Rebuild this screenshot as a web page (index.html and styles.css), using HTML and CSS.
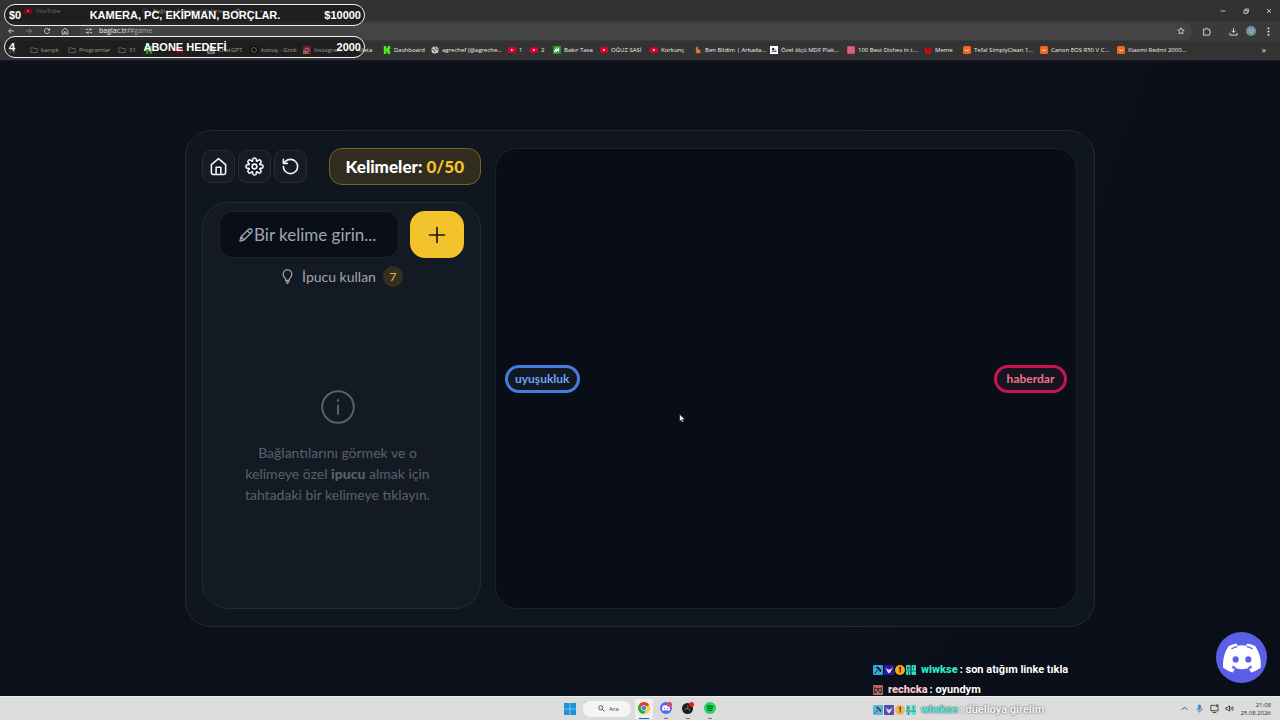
FILE: index.html
```html
<!DOCTYPE html>
<html lang="tr">
<head>
<meta charset="utf-8">
<title>Bağlaç - Kelime Oyunu</title>
<link rel="stylesheet" href="styles.css">
</head>
<body>
<svg class="defs" aria-hidden="true">
  <symbol id="folder" viewBox="0 0 10 10"><path d="M1 2.200h3l1 1h4v5H1z" fill="none" stroke="#b5b5b5"/></symbol>
  <symbol id="yt" viewBox="0 0 10 10"><rect y="1.500" width="10" height="7" rx="1.500" fill="#e0002c"/><path d="M4 3.400v3.200L6.600 5z" fill="#fff"/></symbol>
  <symbol id="shop" viewBox="0 0 10 10"><rect width="10" height="10" rx="2" fill="#f2671d"/><path d="M2.500 4.500q2.500 3 5 0" fill="none" stroke="#fff"/></symbol>
  <symbol id="kick" viewBox="0 0 10 10"><path d="M1 0h3v3h1V2h1V0h3v4H8v2h1v4H6V8H5V7H4v3H1z" fill="#43f01c"/></symbol>
  <symbol id="discord" viewBox="0 0 24 24"><path d="M20.300 4.400a19.800 19.800 0 0 0-4.900-1.500c-.3.400-.500.900-.7 1.300a18 18 0 0 0-5.500 0c-.2-.4-.4-.9-.7-1.300a19.700 19.700 0 0 0-4.900 1.500C.5 9-.3 13.600.1 18.100a20 20 0 0 0 6 3c.5-.6.900-1.300 1.300-2l-2-1 .5-.4c4 1.800 8.200 1.800 12.100 0l.5.4-2 1c.4.700.8 1.400 1.300 2a20 20 0 0 0 6-3c.5-5.200-.8-9.700-3.500-13.700z" fill="#fff"/><ellipse cx="8" cy="12.900" rx="1.900" ry="2" fill="#5b5fe8"/><ellipse cx="16" cy="12.900" rx="1.900" ry="2" fill="#5b5fe8"/><path d="M5.300 6.300q2-1.300 3.700-1.500M18.700 6.300q-2-1.300-3.700-1.500M6 17q1 .8 2 1.100M18 17q-1 .8-2 1.100" fill="none" stroke="#5b5fe8" stroke-width=".8"/></symbol>
  <symbol id="badge-sword" viewBox="0 0 10 10"><rect width="10" height="10" rx="1" fill="#31a9d6"/><path d="M1.500 8.500L6 4M3 2.500L5 2l3 3-.5 2L6 4z" fill="#06243c" stroke="#06243c"/></symbol>
  <symbol id="badge-bird" viewBox="0 0 10 10"><rect width="10" height="10" rx="1" fill="#2a1aa0"/><path d="M1.500 2.500L4 4.500h2l3-2.500-2.500 5L5 8.500 3.500 7z" fill="#e4dcff"/></symbol>
  <symbol id="badge-one" viewBox="0 0 10 10"><circle cx="5" cy="5" r="5" fill="#f5a81c"/><path d="M3.800 3.500L5.300 2.500V7.500" fill="none" stroke="#3e2600" stroke-width="1.300"/></symbol>
  <symbol id="badge-gift" viewBox="0 0 10 10"><rect width="4.500" height="10" rx="1" fill="#35dfc4"/><rect x="5.500" width="4.500" height="10" rx="1" fill="#35dfc4"/><path d="M1.500 2h1.500v2H1.500zM0 6h10M2.500 7v3M7.500 1v3" fill="none" stroke="#075e63" stroke-width=".9"/></symbol>
</svg>

<div class="screen">
  <header class="browser">
    <div class="tabs">
      <div class="tab"><svg class="fav"><use href="#yt"/></svg><span>YouTube</span><button class="close" aria-label="Sekmeyi kapat">×</button></div>
      <div class="tab tab-active"><svg class="fav" viewBox="0 0 10 10"><circle cx="5" cy="5" r="3" fill="none" stroke="#5879a8"/></svg><span>Bağlaç - Anlamsal Kelime</span><svg class="fav" viewBox="0 0 10 10"><path d="M1 4h2l3-2v6L3 6H1zM7 3q2 2 0 4" fill="none" stroke="#bbb"/></svg><button class="close" aria-label="Sekmeyi kapat">×</button></div>
      <button class="close" aria-label="Yeni sekme">+</button>
      <div class="window-buttons">
        <button aria-label="Küçült"><svg viewBox="0 0 10 10"><path d="M2 5h6"/></svg></button>
        <button aria-label="Geri yükle"><svg viewBox="0 0 10 10"><path d="M2.500 4h4v4h-4zM4 4V2.500h4v4H6.500"/></svg></button>
        <button aria-label="Kapat"><svg viewBox="0 0 10 10"><path d="M2.500 2.500l5 5M7.500 2.500l-5 5"/></svg></button>
      </div>
    </div>
    <div class="toolbar">
      <button aria-label="Geri"><svg viewBox="0 0 10 10"><path d="M9 5H2M5 2L2 5l3 3"/></svg></button>
      <button class="faded" aria-label="İleri"><svg viewBox="0 0 10 10"><path d="M1 5h7M5 2l3 3-3 3"/></svg></button>
      <button aria-label="Yenile"><svg viewBox="0 0 10 10"><path d="M8 6a3.200 3.200 0 1 1-1-3.500L8.200 4M8.300 1.500V4H6"/></svg></button>
      <button aria-label="Ana sayfa"><svg viewBox="0 0 10 10"><path d="M1.500 4.500L5 1.500l3.500 3V9H6V6H4v3H1.500z"/></svg></button>
      <label class="address"><svg viewBox="0 0 10 10"><path d="M1 3h3M6 3h3M1 7h3M6 7h3M6 1.500v3M4 5.500v3"/></svg><span>baglac.tr/<i>#game</i></span><svg class="star" viewBox="0 0 10 10"><path d="M5 1l1.200 2.600 2.800.3-2.100 1.900.6 2.800L5 7.200 2.500 8.600l.6-2.800L1 3.900l2.800-.3z"/></svg></label>
      <div class="tools">
        <button aria-label="Uzantılar"><svg viewBox="0 0 10 10"><path d="M1.500 2.500h2.500q0-1.500 1-1.500t1 1.500h2.500v2.300q1 0 1 1t-1 1v2.200h-7V6.500q1 0 1-1t-1-1z"/></svg></button>
        <button class="download" aria-label="İndirilenler"><svg viewBox="0 0 10 10"><path d="M5 1v5M2.800 4L5 6.300 7.200 4M1 6.500V9h8V6.500"/></svg></button>
        <button class="profile" aria-label="Profil">U</button>
        <button class="dots" aria-label="Menü"><svg viewBox="0 0 10 10"><circle cx="5" cy="1.500" r="1.100"/><circle cx="5" cy="5" r="1.100"/><circle cx="5" cy="8.500" r="1.100"/></svg></button>
      </div>
    </div>
    <nav class="bookmarks" aria-label="Yer işaretleri">
      <a href="#"><svg viewBox="0 0 10 10"><path d="M1 1h3v3H1zM6 1h3v3H6zM1 6h3v3H1zM6 6h3v3H6z" fill="#777"/></svg></a>
      <a href="#"><svg><use href="#folder"/></svg>karışık</a>
      <a href="#"><svg><use href="#folder"/></svg>Programlar</a>
      <a href="#"><svg><use href="#folder"/></svg>31</a>
      <a href="#"><svg><use href="#kick"/></svg></a>
      <a href="#"><svg><use href="#yt"/></svg></a>
      <a href="#"><svg viewBox="0 0 10 10"><rect width="10" height="10" rx="2" fill="#ddd"/><circle cx="5" cy="5" r="3" fill="none" stroke="#222"/></svg>ChatGPT</a>
      <a href="#"><svg viewBox="0 0 10 10"><circle cx="5" cy="5" r="5" fill="#111"/><circle cx="5" cy="5" r="3" fill="none" stroke="#ddd"/></svg>konuş - Grok</a>
      <a href="#"><svg viewBox="0 0 10 10"><rect width="10" height="10" rx="2" fill="#d82b78"/><path d="M0 8V10H8L0 5z" fill="#f8ad36"/><circle cx="5" cy="5" r="2.300" fill="none" stroke="#fff"/></svg>Instagram</a>
      <a href="#" class="meta">Meta</a>
      <a href="#"><svg><use href="#kick"/></svg>Dashboard</a>
      <a href="#"><svg viewBox="0 0 10 10"><circle cx="5" cy="5" r="4.500" fill="#ccc"/><path d="M1 4l3 1 1 3M5 1l1 3 3 1" fill="none" stroke="#333"/></svg>agrechef (@agreche...</a>
      <a href="#"><svg><use href="#yt"/></svg>1</a>
      <a href="#"><svg><use href="#yt"/></svg>2</a>
      <a href="#"><svg viewBox="0 0 10 10"><rect width="10" height="10" fill="#1d9c2c"/><path d="M1.500 7.500L4 3v4l3-4v4" fill="none" stroke="#fff" stroke-width="1.300"/></svg>Bakır Tava</a>
      <a href="#"><svg><use href="#yt"/></svg>OĞUZ SASİ</a>
      <a href="#"><svg><use href="#yt"/></svg>Korkunç</a>
      <a href="#"><svg viewBox="0 0 10 10"><path d="M3 1h2v3l3 1v4H3L2 6z" fill="#d77440"/></svg>Ben Bildim | Arkada...</a>
      <a href="#"><svg viewBox="0 0 10 10"><rect width="10" height="10" fill="#fff"/><path d="M2 7h6M3 3h2v2H3zM6 5h2" stroke="#222"/></svg>Özel ölçü MDF Plak...</a>
      <a href="#"><svg viewBox="0 0 10 10"><rect width="10" height="10" fill="#c52552"/><path d="M0 2.500h10M0 5h10M0 7.500h10M2.500 0v10M5 0v10M7.500 0v10" stroke="#eda7b9" stroke-width=".7"/></svg>100 Best Dishes in t...</a>
      <a href="#"><svg viewBox="0 0 10 10"><circle cx="5" cy="5.500" r="4" fill="#d40e1a"/><path d="M5 0v4M3 5h4" stroke="#66070c"/></svg>Meme</a>
      <a href="#"><svg><use href="#shop"/></svg>Tefal SimplyClean 1...</a>
      <a href="#"><svg><use href="#shop"/></svg>Canon EOS R50 V C...</a>
      <a href="#"><svg><use href="#shop"/></svg>Xiaomi Redmi 2000...</a>
      <button class="more" aria-label="Diğer yer işaretleri">»</button>
    </nav>
  </header>

  <main class="page">
    <section class="card">
      <div class="side">
        <div class="top">
          <div class="icon-buttons">
            <button aria-label="Ana sayfa"><svg viewBox="0 0 24 24"><path d="M3 9.500l9-7.500 9 7.500V20a2 2 0 0 1-2 2H5a2 2 0 0 1-2-2zM9 22v-9h6v9"/></svg></button>
            <button aria-label="Ayarlar"><svg viewBox="-12 -12 24 24"><defs><path id="tooth" d="M6.740-2.790Q7.100-2.300 7.800-2.400L9.300-2.200Q10.800-1.800 10.800 0T9.300 2.200L7.800 2.400Q7.100 2.300 6.740 2.790"/></defs><use href="#tooth"/><use href="#tooth" transform="rotate(45)"/><use href="#tooth" transform="rotate(90)"/><use href="#tooth" transform="rotate(135)"/><use href="#tooth" transform="rotate(180)"/><use href="#tooth" transform="rotate(225)"/><use href="#tooth" transform="rotate(270)"/><use href="#tooth" transform="rotate(315)"/><circle r="3"/></svg></button>
            <button aria-label="Yeniden başlat"><svg viewBox="0 0 24 24"><path d="M3 12a9 9 0 1 0 9-9 9.700 9.700 0 0 0-6.700 2.700L3 8M3 3v5h5"/></svg></button>
          </div>
          <div class="score">Kelimeler: <b>0/50</b></div>
        </div>
        <div class="panel">
          <form class="entry">
            <label class="field"><svg viewBox="0 0 24 24"><path d="M3 21l1.500-6L16 3.500a3.200 3.200 0 0 1 4.500 4.500L9 19.500zM14 5.500l4.500 4.500M5 15l4 4"/></svg><input type="text" placeholder="Bir kelime girin..." aria-label="Bir kelime girin"></label>
            <button class="add" type="button" aria-label="Ekle"><svg viewBox="0 0 24 24"><path d="M12 3v18M3 12h18"/></svg></button>
          </form>
          <button class="hint"><svg viewBox="0 0 24 24"><path d="M9 18v-1.500C9 14.500 5 13 5 8.500a7 7 0 0 1 14 0c0 4.500-4 6-4 8V18zM9 20.500h6M10.500 23h3"/></svg><span>İpucu kullan</span><span class="count">7</span></button>
          <div class="empty">
            <svg viewBox="0 0 34 34"><circle cx="17" cy="17" r="15.800"/><path d="M17 15.500v8.500M17 10v1"/></svg>
            <p>Bağlantılarını görmek ve o kelimeye özel <strong>ipucu</strong> almak için tahtadaki bir kelimeye tıklayın.</p>
          </div>
        </div>
      </div>
      <div class="board">
        <button class="word blue">uyuşukluk</button>
        <button class="word red">haberdar</button>
      </div>
    </section>
  </main>

  <footer class="taskbar">
    <div class="apps">
      <button aria-label="Başlat"><svg viewBox="0 0 12 12"><path d="M0 0h5.700v5.700H0zM6.300 0H12v5.700H6.300zM0 6.300h5.700V12H0zM6.300 6.300H12V12H6.300z" fill="#1795dc"/></svg></button>
      <label class="search"><svg viewBox="0 0 10 10"><circle cx="4" cy="4" r="3"/><path d="M6.200 6.200L9.500 9.500"/></svg><input type="text" placeholder="Ara" aria-label="Ara"></label>
      <button class="running current" aria-label="Chrome"><svg viewBox="0 0 12 12"><circle cx="6" cy="6" r="6" fill="#ffca28"/><path d="M6 6L.8 3A6 6 0 0 1 11.200 3z" fill="#e53b2e"/><path d="M6 6L.8 3A6 6 0 0 0 6 12L8 7z" fill="#2da94f"/><circle cx="6" cy="6" r="2.800" fill="#fff"/><circle cx="6" cy="6" r="2.200" fill="#3b7ded"/></svg></button>
      <button class="running" aria-label="Discord"><svg viewBox="0 0 12 12"><circle cx="6" cy="6" r="6" fill="#5865f2"/><use href="#discord" x="2" y="2" width="8" height="8"/><circle cx="9.500" cy="2.500" r="2.500" fill="#d94b5c"/></svg></button>
      <button class="running" aria-label="OBS"><svg viewBox="0 0 12 12"><circle cx="5.500" cy="6.500" r="5.500" fill="#1c1c1c"/><path d="M5 3q2 1 .5 3.500M2.500 8q1.500-2 3-1.500M8 9Q8 6.500 5.500 6.500" fill="none" stroke="#999" stroke-width=".7"/><circle cx="9.500" cy="2.500" r="2.500" fill="#f01818"/></svg></button>
      <button class="running" aria-label="Spotify"><svg viewBox="0 0 12 12"><circle cx="6" cy="6" r="6" fill="#1ed760"/><path d="M2.800 4.300q3.500-1 6.500.5M3.200 6.300q3-.8 5.500.5M3.500 8.200q2.500-.6 4.500.4" fill="none" stroke="#11321d"/></svg></button>
    </div>
    <div class="tray">
      <svg viewBox="0 0 10 10"><path d="M2 6.500l3-3 3 3"/></svg>
      <svg class="mic" viewBox="0 0 10 10"><rect x="3.700" y="1" width="2.600" height="5" rx="1.300" fill="#4a83bd"/><path d="M2 5q0 3 3 3t3-3M5 8v1.500"/></svg>
      <svg viewBox="0 0 10 10"><path d="M6 1.500H1v6h8V4M3 9.500h4M7 1h2v2H7z"/></svg>
      <svg viewBox="0 0 10 10"><path d="M1 4h1.500L5 2v6L2.500 6H1zM6.500 3.500q1 1.500 0 3M8 2.500q2 2.500 0 5"/></svg>
      <div class="clock"><time>21:08</time><span>25.08.2026</span></div>
    </div>
  </footer>

  <div class="goals">
    <div class="goal"><span>$0</span><span>KAMERA, PC, EKİPMAN, BORÇLAR.</span><span>$10000</span></div>
    <div class="goal"><span>4</span><span>ABONE HEDEFİ</span><span>2000</span></div>
  </div>

  <div class="discord"><svg><use href="#discord"/></svg></div>

  <div class="chat">
    <p><svg><use href="#badge-sword"/></svg><svg><use href="#badge-bird"/></svg><svg><use href="#badge-one"/></svg><svg><use href="#badge-gift"/></svg><b>wiwkse</b><span>: son atığım linke tıkla</span></p>
    <p><svg viewBox="0 0 10 10"><rect width="10" height="10" rx="1" fill="#b4665c"/><path d="M1 2l2 1h4l2-1v6H1z" fill="#512b32"/><path d="M2 5h2M6 5h2M4 7h2" stroke="#f2c6b9"/></svg><b class="pink">rechcka</b><span>: oyundym</span></p>
    <p class="last"><svg><use href="#badge-sword"/></svg><svg><use href="#badge-bird"/></svg><svg><use href="#badge-one"/></svg><svg><use href="#badge-gift"/></svg><b>wiwkse</b><span>: düelloya girelim</span></p>
  </div>

  <svg class="cursor" viewBox="0 0 10 14"><path d="M1 1v10l2.300-2 1.500 3.500 1.700-.8L5 8.400h3.300z" fill="#fff" stroke="#111" stroke-width=".7"/></svg>
</div>
</body>
</html>
```

FILE: styles.css
```css
* { box-sizing: border-box; }
body { margin: 0; background: #0b0f19; font-family: Lato, "Open Sans", sans-serif; }
button, input { font: inherit; color: inherit; background: none; border: 0; padding: 0; margin: 0; }
svg { display: block; flex: none; }
p { margin: 0; }
.defs { position: absolute; width: 0; height: 0; }

.screen { position: relative; min-height: 100vh; display: grid; grid-template-rows: auto 1fr auto; overflow: hidden; }

/* browser chrome */
.browser { background: #353535; color: #dcdcdc; font: 7px/10px "Open Sans", "Noto Sans", sans-serif; border-bottom: 1px solid #17181f; }
.browser button { display: grid; place-items: center; }
.browser svg { width: 8px; height: 8px; }
.toolbar svg, .window-buttons svg { fill: none; stroke: #e0e0e0; }
.tabs { display: flex; align-items: center; gap: 4px; height: 21px; padding: 0 4px 0 20px; background: #323232; color: #b4b4b4; font-size: 6px; }
.tab { display: flex; align-items: center; gap: 4px; width: 113px; padding: 0 4px; }
.tab-active { width: 118px; color: #d0d0d0; white-space: nowrap; }
.tab-active span { flex: 1; overflow: hidden; }
.tab .close { margin-left: auto; }
.close { font-size: 8px; }
.window-buttons { display: flex; gap: 13px; margin-left: auto; padding-right: 2px; }
.window-buttons button { width: 10px; height: 20px; }
.toolbar { display: flex; align-items: center; gap: 10px; height: 20px; padding: 0 7px; background: #3a3a3a; }
.faded { opacity: .5; }
.address { display: flex; align-items: center; gap: 6px; flex: 1; height: 17px; padding: 0 7px 0 6px; border-radius: 9px; background: #444; color: #f0f0f0; }
.address i { font-style: normal; color: #aaa; }
.star { margin-left: auto; }
.tools { display: flex; align-items: center; gap: 8px; }
.tools .download { margin-left: 10px; }
.tools svg { width: 9px; height: 9px; }
.profile { width: 10px; height: 10px; border-radius: 50%; background: #6f929c; font-size: 6px; }
.dots svg { fill: #e0e0e0; stroke: none; }
.bookmarks { display: grid; grid-template-columns: 22px 38px 50px 27px 30px 32px 43px 53px 50px 30px 48px 77px 22px 23px 47px 50px 44px 76px 77px 77px 39px 77px 77px 77px 1fr; align-items: center; height: 18px; padding: 0 14px 0 8px; background: #333; font-size: 6px; }
.bookmarks a { display: flex; align-items: center; gap: 3px; color: #f0f0f0; text-decoration: none; white-space: nowrap; }
.bookmarks .more { justify-self: end; font-size: 9px; }
.bookmarks .meta { padding-left: 5px; }
.browser { padding-bottom: 1px; }

/* game */
.page { display: grid; place-items: center; padding: 24px; background: linear-gradient(110deg, #0b101b, #0c111a 50%, #0a0e19); }
.card { width: 100%; max-width: 910px; display: grid; grid-template-columns: 279px 1fr; gap: 14px; padding: 17px 17px 17px 16px; border: 1px solid #242a34; border-radius: 26px; background: #10161f; }
.side { display: flex; flex-direction: column; gap: 17px; }
.top { display: flex; align-items: center; justify-content: space-between; }
.icon-buttons { display: flex; gap: 3px; }
.icon-buttons button { display: grid; place-items: center; width: 33px; height: 33px; border: 1px solid #282c37; border-radius: 9px; background: #171b27; }
.icon-buttons svg { width: 19px; height: 19px; fill: none; stroke: #f4f5f7; stroke-width: 2; stroke-linecap: round; stroke-linejoin: round; }
.score { height: 37px; padding: 0 16px; border: 1px solid #7b651e; border-radius: 13px; background: #302d20; color: #fff; font-size: 17px; line-height: 35px; font-weight: 900; }
.score b { color: #fac22b; font-weight: 900; }
.panel { flex: 1; display: flex; flex-direction: column; align-items: center; padding: 8px 16px; border: 1px solid #242a35; border-radius: 26px; background: #141a24; }
.entry { display: flex; gap: 11px; width: 100%; }
.field { display: flex; align-items: center; flex: 1; min-width: 0; height: 47px; padding: 0 10px 0 18px; border: 1px solid #1d232d; border-radius: 13px; background: #0a0e17; color: #a0a6b1; font-size: 17px; }
.field svg { width: 16px; height: 16px; fill: none; stroke: #a0a6b1; stroke-width: 2; stroke-linejoin: round; }
.field input { flex: 1; min-width: 0; outline: 0; }
.field input::placeholder { color: #a0a6b1; opacity: 1; }
.add { display: grid; place-items: center; width: 54px; height: 47px; border-radius: 15px; background: #f3c32c; }
.add svg { width: 20px; height: 20px; fill: none; stroke: #17181a; stroke-width: 2; stroke-linecap: round; }
.hint { display: flex; align-items: center; gap: 7px; margin-top: 8px; color: #a0a6b1; font-size: 14px; line-height: 21px; }
.hint svg { width: 15px; height: 15px; fill: none; stroke: currentColor; stroke-width: 2; stroke-linejoin: round; }
.count { width: 20px; height: 21px; border-radius: 10px; background: #352f20; color: #e2b83a; font-size: 12px; text-align: center; }
.empty { flex: 1; display: flex; flex-direction: column; align-items: center; justify-content: center; gap: 18px; width: 210px; margin-right: 8px; padding-top: 8px; color: #59606d; text-align: center; font-size: 14px; line-height: 21px; }
.empty svg { width: 34px; height: 34px; fill: none; stroke: #59606d; stroke-width: 2; stroke-linecap: round; }
.empty strong { font-weight: 900; }
.board { display: flex; align-items: center; justify-content: space-between; min-height: 461px; padding: 0 9px; border: 1px solid #1c222c; border-radius: 22px; background: #090d17; }
.word { min-width: 73px; height: 28px; padding: 0 7px; border: 3px solid; border-radius: 14px; background: #111824; font-size: 12px; font-weight: 700; }
.blue { border-color: #477bdc; color: #6ba4f5; }
.red { border-color: #c41650; color: #ee7490; background: #17141f; }

/* taskbar */
.taskbar { display: grid; grid-template-columns: 1fr auto 1fr; align-items: center; height: 24px; background: #dcdcdc; border-top: 1px solid #eee; color: #2c2c2c; font: 6px/8px "Open Sans", sans-serif; }
.apps { grid-column: 2; display: flex; align-items: center; gap: 4px; }
.apps button { display: grid; place-items: center; width: 18px; height: 20px; }
.apps button svg { width: 12px; height: 12px; }
.search { display: flex; align-items: center; gap: 4px; width: 48px; height: 16px; padding-left: 15px; border-radius: 8px; background: #f5f5f5; }
.search svg { width: 7px; height: 7px; fill: none; stroke: #222; }
.search input { width: 20px; outline: 0; }
.search input::placeholder { color: #444; opacity: 1; }
.apps .running { border-bottom: 1px solid #dcdcdc; border-image: linear-gradient(90deg, transparent 40%, #777 40% 60%, transparent 60%) 1; }
.apps .current { background: #efefef; border-image: linear-gradient(90deg, transparent 25%, #176bb7 25% 75%, transparent 75%) 1; }
.tray { justify-self: end; display: flex; align-items: center; gap: 6px; padding-right: 9px; }
.tray svg { width: 9px; height: 9px; fill: none; stroke: #333; }
.tray .mic { stroke: #4a83bd; }
.clock { display: flex; flex-direction: column; text-align: right; }

/* stream overlays */
.goals { position: absolute; top: 4px; left: 4px; width: 361px; display: grid; gap: 10px; }
.goal { display: grid; grid-template-columns: 50px 1fr 50px; align-items: center; height: 22px; padding: 0 3px 0 4px; border: 1px solid #f2f2f2; border-radius: 11px; background: rgba(0, 0, 0, .4); color: #fff; font: 700 11px/20px "Liberation Sans", Arial, sans-serif; text-align: center; }
.goal span:first-child { text-align: left; }
.goal span:last-child { text-align: right; }
.discord { position: absolute; right: 13px; bottom: 37px; display: grid; place-items: center; width: 51px; height: 51px; border-radius: 50%; background: #5b5fe8; }
.discord svg { width: 38px; height: 38px; }
.chat { position: absolute; left: 873px; bottom: 0; font: 700 11px/20px Roboto, sans-serif; color: #fff; }
.chat p { display: flex; align-items: center; gap: 1px; text-shadow: 0 0 2px #000; white-space: nowrap; }
.chat svg { width: 10px; height: 10px; }
.chat b { margin: 0 1px 0 4px; color: #2fe6cf; }
.chat .pink { color: #f5c6d0; }
.chat .last { opacity: .75; }
.cursor { position: absolute; left: 679px; top: 413px; width: 7px; height: 11px; }
```
